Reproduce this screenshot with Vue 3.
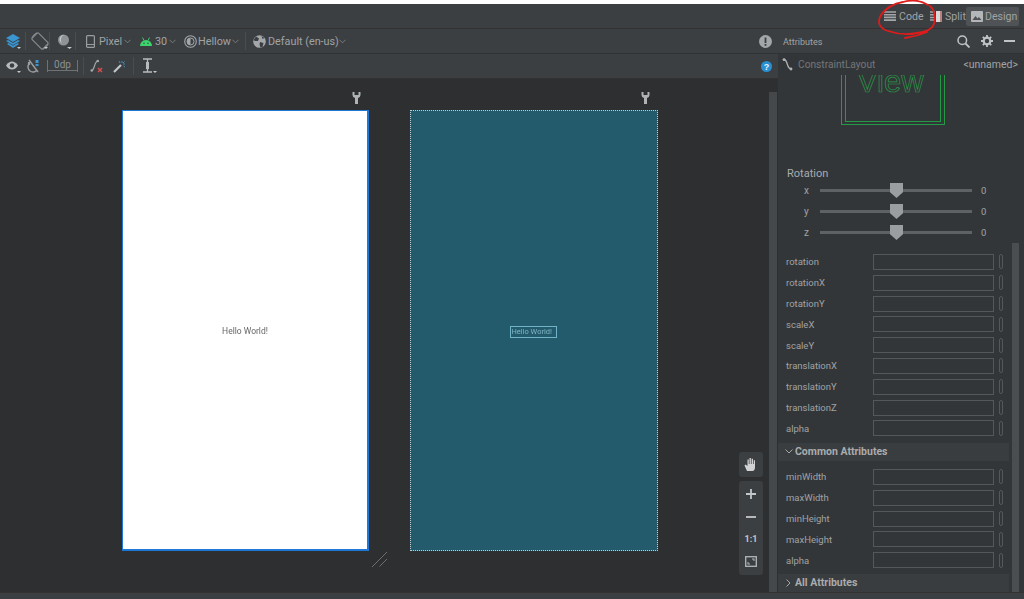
<script setup>
const first = ['rotation','rotationX','rotationY','scaleX','scaleY','translationX','translationY','translationZ','alpha']
const common = ['minWidth','maxWidth','minHeight','maxHeight','alpha']
const axes = ['x','y','z']
</script>

<template>
  <div class="app">
    <div class="topline"></div>
    <header class="titlebar">
      <div class="mode">
        <svg width="12" height="11" viewBox="0 0 12 11"><path d="M0 1h12M0 3.700h12M0 6.400h12M0 9.100h12" stroke="#a4a7a9" stroke-width="1.600"/></svg>
        <span class="w25">Code</span>
      </div>
      <div class="mode split">
        <svg width="12" height="11" viewBox="0 0 12 11"><path d="M0 1h5M0 3.700h5M0 6.400h5M0 9.100h5" stroke="#a4a7a9" stroke-width="1.500"/><rect x="6" y="0" width="4" height="11" fill="#d8d8d8"/><rect x="10" y="0" width="2" height="11" fill="#b98080"/></svg>
        <span class="w19">Split</span>
      </div>
      <div class="mode active">
        <svg width="12" height="11" viewBox="0 0 12 11"><rect width="12" height="11" rx="1" fill="#b4b7b9"/><path d="M1.500 9l3-4 2 2.400 1.400-1.400 2.600 3z" fill="#4e5254"/></svg>
        <span class="w31">Design</span>
      </div>
      <svg class="scribble" width="80" height="45" viewBox="0 0 80 45"><path d="M58 5C50 0 40 0 33 2C24 3 14 9 10 17C7 24 11 29 18 31C27 34 38 35 47 33C55 32 62 30 64 24C66 17 64 9 60 6M35 38C42 37 50 35 57 32" fill="none" stroke="#e01b1b" stroke-width="1.800" stroke-linecap="round"/></svg>
    </header>

    <main class="main">
      <section class="editor">
        <div class="toolbar first">
          <svg class="ml5" width="16" height="16" viewBox="0 0 16 16"><path d="M8 1l7 4-7 4-7-4z" fill="#3a95d0"/><path d="M1 8l2-1 5 3 5-3 2 1-7 4zM2 11l1.500-1L8 12.700 12.500 10 14 11l-6 4z" fill="#3a95d0"/><path d="M12 14h4l-2 2z" fill="#c8c8c8"/></svg>
          <i class="sep ml4"></i>
          <svg class="ml5" width="18" height="18" viewBox="0 0 18 18"><g fill="none" stroke="#8f9294" stroke-width="1"><rect x="4.500" y="1.500" width="9" height="15" rx="1" transform="rotate(-45 9 9)"/><path d="M.8 6A9 9 0 0 1 6 .8M17.200 12A9 9 0 0 1 12 17.200"/></g><path d="M13 15h4l-2 2z" fill="#c8c8c8"/></svg>
          <i class="sep"></i>
          <svg class="ml7" width="15" height="16" viewBox="0 0 15 16"><circle cx="6.500" cy="7" r="5.500" fill="#8f9396"/><path d="M3 5a4 4 0 0 1 4-3a5 5 0 0 0-2 8a4 4 0 0 1-2-5z" fill="#c5d0d6"/><path d="M10 14h5l-2.500 2z" fill="#c8c8c8"/></svg>
          <i class="sep ml3"></i>
          <svg class="ml10" width="9" height="13" viewBox="0 0 9 13"><rect x=".6" y=".6" width="7.800" height="11.800" rx="1" fill="none" stroke="#9a9d9f" stroke-width="1.200"/><path d="M1 9.500h7" stroke="#9a9d9f"/></svg>
          <span class="tb w21 ml4">Pixel</span><svg class="chev ml4" width="7" height="5" viewBox="0 0 8 5"><path d="M.5.500L4 4 7.500.500"/></svg>
          <svg class="ml9" width="12" height="9" viewBox="0 0 12 9"><path d="M0 9a6 6 0 0 1 12 0z" fill="#3dd56d"/><path d="M2.500.500l1.500 3M9.500.500L8 3.500" stroke="#3dd56d" stroke-width=".9"/><circle cx="4" cy="6.300" r=".7" fill="#3c3f41"/><circle cx="8" cy="6.300" r=".7" fill="#3c3f41"/></svg>
          <span class="tb w10 ml3">30</span><svg class="chev ml4" width="7" height="5" viewBox="0 0 8 5"><path d="M.5.500L4 4 7.500.500"/></svg>
          <svg class="ml8" width="13" height="13" viewBox="0 0 13 13"><circle cx="6.500" cy="6.500" r="5.800" fill="none" stroke="#a4a7a9" stroke-width="1.100"/><path d="M6.500 3a3.500 3.500 0 0 0 0 7z" fill="#a4a7a9"/><circle cx="6.500" cy="6.500" r="3.500" fill="none" stroke="#a4a7a9"/></svg>
          <span class="tb w30 ml1">Hellow</span><svg class="chev ml4" width="7" height="5" viewBox="0 0 8 5"><path d="M.5.500L4 4 7.500.500"/></svg>
          <i class="sep ml6"></i>
          <svg class="ml7" width="13" height="13" viewBox="0 0 13 13"><circle cx="6.500" cy="6.500" r="6.300" fill="#a4a7a9"/><path d="M3 1.500l3 2-1 2.500-3 0-1.500-1zM7 7l3.500 1-1 4-2 .5-1-3zM8.500 1l3 2-2 1z" fill="#3c3f41"/></svg>
          <span class="tb w67 ml2">Default (en-us)</span><svg class="chev ml4" width="7" height="5" viewBox="0 0 8 5"><path d="M.5.500L4 4 7.500.500"/></svg>
          <svg class="end" width="13" height="13" viewBox="0 0 13 13"><circle cx="6.500" cy="6.500" r="6.500" fill="#a4a7a9"/><rect x="5.600" y="2.500" width="1.800" height="5.500" fill="#3c3f41"/><rect x="5.600" y="9" width="1.800" height="1.800" fill="#3c3f41"/></svg>
        </div>
        <div class="toolbar second">
          <svg class="ml5" width="16" height="14" viewBox="0 0 16 14"><path d="M1 6.500C3 3.500 5 2.500 7 2.500s4 1 6 4c-2 3-4 4-6 4s-4-1-6-4z" fill="#b8bbbd"/><circle cx="7" cy="6.500" r="2.300" fill="#3c3f41"/><path d="M12 12h4l-2 2z" fill="#c8c8c8"/></svg>
          <svg class="ml6" width="13" height="14" viewBox="0 0 13 14"><path d="M2 5a5 5 0 0 0 8 6M2 1l9 12" fill="none" stroke="#9a9d9f" stroke-width="1.400"/><path d="M2 3v3" stroke="#9a9d9f" stroke-width="2.200"/><rect x="8.500" y="1" width="3" height="3" fill="#3a95d0"/><rect x="8.500" y="5" width="3" height="2" fill="#3a95d0"/></svg>
          <div class="margin ml7"><span>0dp</span></div>
          <i class="sep ml5"></i>
          <svg class="ml6" width="13" height="14" viewBox="0 0 13 14"><path d="M1.500 11.500C5 11.500 4 2 8 2" fill="none" stroke="#a4a7a9" stroke-width="1.200"/><circle cx="1.800" cy="11.500" r="1.300" fill="#a4a7a9"/><circle cx="7.800" cy="2" r="1.300" fill="#a4a7a9"/><path d="M8 9l4 4M12 9l-4 4" stroke="#d94f4f" stroke-width="1.400"/></svg>
          <svg class="ml10" width="13" height="13" viewBox="0 0 13 13"><path d="M1 12l7-7" stroke="#c4c7c9" stroke-width="2.200"/><path d="M9 1v2M12 4h-2M11.500 1.500L10 3M12 7l-1.500-1M6 1l1 2" stroke="#3a95d0" stroke-width=".9"/></svg>
          <i class="sep ml7"></i>
          <svg class="ml8" width="15" height="16" viewBox="0 0 15 16"><path d="M1 1h9M1 14h9M5.500 1v13" stroke="#b8bbbd" stroke-width="1.300" fill="none"/><rect x="4" y="4" width="3" height="7" fill="#b8bbbd"/><path d="M11 13h4l-2 2z" fill="#c8c8c8"/></svg>
          <svg class="end help" width="11" height="11" viewBox="0 0 11 11"><circle cx="5.500" cy="5.500" r="5.500" fill="#2a8fd0"/><text x="5.500" y="8.600" text-anchor="middle" class="q">?</text></svg>
        </div>
        <div class="canvas">
          <div class="phones">
            <div class="phone light">
              <svg class="wrench" width="9" height="12" viewBox="0 0 9 12"><path d="M.5 0v3a3 3 0 0 0 2.500 2.900V12h3V5.900A3 3 0 0 0 8.500 3V0H6.500v3h-4V0z" fill="#b0b3b5"/></svg>
              <span class="hello">Hello World!</span>
              <svg class="resize" width="18" height="18" viewBox="0 0 18 18"><path d="M1 16L16 1M8.500 15.500L16 8" stroke="#6c6e70" stroke-width="1"/></svg>
            </div>
            <div class="phone blue">
              <svg class="wrench" width="9" height="12" viewBox="0 0 9 12"><path d="M.5 0v3a3 3 0 0 0 2.500 2.900V12h3V5.900A3 3 0 0 0 8.500 3V0H6.500v3h-4V0z" fill="#b0b3b5"/></svg>
              <span class="hello selected">Hello World!</span>
            </div>
          </div>
          <div class="float hand">
            <svg width="14" height="15" viewBox="0 0 14 15"><path d="M3 14L.5 8.500l1-1L3.500 9V2.500h1.300V7h.7V1h1.400v6h.7V1.700h1.400V7h.7V3.300h1.300V10c0 2.500-1 4-2.500 4z" fill="#d0d2d3"/></svg>
          </div>
          <div class="float zoom">
            <span class="zbtn"><svg width="10" height="10" viewBox="0 0 10 10"><path d="M5 0v10M0 5h10" stroke="#c4c7c9" stroke-width="1.800"/></svg></span>
            <span class="zbtn"><svg width="10" height="10" viewBox="0 0 10 10"><path d="M0 5h10" stroke="#c4c7c9" stroke-width="1.800"/></svg></span>
            <span class="zbtn one">1:1</span>
            <span class="zbtn"><svg width="12" height="11" viewBox="0 0 12 11"><rect x=".7" y=".7" width="10.600" height="9.600" fill="none" stroke="#b4b7b9" stroke-width="1.300"/><path d="M2.500 8.500V6h1v1.500H5v1zM9.500 2.500V5h-1V3.500H7v-1z" fill="#b4b7b9"/></svg></span>
          </div>
          <div class="vscroll"></div>
        </div>
      </section>

      <aside class="panel">
        <div class="phead">
          <span class="ptitle">Attributes</span>
          <svg class="psearch" width="13" height="13" viewBox="0 0 13 13"><circle cx="5.300" cy="5.300" r="4.300" fill="none" stroke="#c0c3c5" stroke-width="1.500"/><path d="M8.500 8.500L12.500 12.500" stroke="#c0c3c5" stroke-width="1.800"/></svg>
          <svg class="pgear" width="12" height="12" viewBox="0 0 12 12"><circle cx="6" cy="6" r="3.300" fill="none" stroke="#c0c3c5" stroke-width="2.200"/><path d="M6 0v2.500M6 9.500V12M0 6h2.500M9.500 6H12M1.800 1.800l1.800 1.800M8.400 8.400l1.800 1.800M10.200 1.800L8.400 3.600M3.600 8.400l-1.800 1.800" stroke="#c0c3c5" stroke-width="1.800"/></svg>
          <svg class="pmin" width="11" height="2" viewBox="0 0 11 2"><rect width="11" height="2" fill="#c0c3c5"/></svg>
        </div>
        <div class="crumb">
          <svg width="11" height="13" viewBox="0 0 11 13"><path d="M2 1.500C6 1.500 4.500 11 9 11" fill="none" stroke="#b0b3b5" stroke-width="1.300"/><circle cx="2" cy="1.700" r="1.400" fill="#b0b3b5"/><circle cx="9" cy="11" r="1.400" fill="#b0b3b5"/></svg>
          <span class="cname">ConstraintLayout</span>
          <span class="unnamed">&lt;unnamed&gt;</span>
        </div>
        <div class="pbody">
          <div class="preview">
            <div class="vbox"><span class="vtext">View</span></div>
          </div>
          <div class="rotation">Rotation</div>
          <div v-for="a in axes" :key="a" class="slider">
            <span class="axis">{{ a }}</span>
            <div class="track"><i class="thumb"></i></div>
            <span class="val">0</span>
          </div>
          <div class="fields">
            <div v-for="f in first" :key="f" class="field">
              <span class="flabel">{{ f }}</span><i class="input"></i><i class="pill"></i>
            </div>
          </div>
          <div class="section open"><svg width="8" height="5" viewBox="0 0 8 5"><path d="M.5.500L4 4 7.500.500" fill="none" stroke="#a4a7a9"/></svg><b>Common Attributes</b></div>
          <div class="fields common">
            <div v-for="f in common" :key="'c' + f" class="field">
              <span class="flabel">{{ f }}</span><i class="input"></i><i class="pill"></i>
            </div>
          </div>
          <div class="section closed"><svg width="8" height="8" viewBox="0 0 8 8"><path d="M1.500.500L5 4 1.500 7.500" fill="none" stroke="#a4a7a9"/></svg><b>All Attributes</b></div>
          <div class="pscroll"></div>
        </div>
      </aside>
    </main>
    <footer class="foot"></footer>
  </div>
</template>

<style>
html, body { margin: 0; background: #3c3f41; }
</style>

<style scoped>
.app { width: 1024px; height: 599px; display: flex; flex-direction: column; overflow: hidden; background: #3c3f41; font-family: Roboto, "Liberation Sans", sans-serif; color: #a0a3a5; position: relative; }
.topline { height: 4px; background: #fff; flex: none; }
.titlebar { height: 24px; flex: none; display: flex; align-items: center; justify-content: flex-end; padding-right: 5px; background: #3c3f41; border-bottom: 1px solid #323232; box-sizing: content-box; position: relative; }
.mode { display: flex; align-items: center; gap: 3px; height: 19px; font-size: 10.600px; white-space: nowrap; }
.w25 { width: 25px; } .w19 { width: 19px; } .w31 { width: 31px; }
.mode.split { margin-left: 6px; }
.mode.active { background: #505356; border-radius: 2px; padding: 0 3px 0 5px; margin-left: 2px; gap: 2px; }
.scribble { position: absolute; right: 74px; top: -4px; }

.main { flex: 1; display: flex; min-height: 0; }
.editor { width: 778px; display: flex; flex-direction: column; flex: none; }
.toolbar { height: 24px; flex: none; display: flex; align-items: center; background: #3c3f41; border-bottom: 1px solid #323232; }
.tb { font-size: 10.800px; white-space: nowrap; }
.w21 { width: 21px; } .w10 { width: 10px; } .w30 { width: 30px; } .w67 { width: 67px; }
.sep { width: 1px; height: 18px; background: #4a4d4f; display: block; }
.chev { fill: none; stroke: #808385; }
.end { margin-left: auto; margin-right: 6px; }
.help { margin-right: 6px; }
.q { font-size: 9px; font-weight: 700; fill: #e8f4fb; font-family: "Liberation Sans", sans-serif; }
.ml1 { margin-left: 1px; } .ml2 { margin-left: 2px; } .ml3 { margin-left: 3px; } .ml4 { margin-left: 4px; } .ml5 { margin-left: 5px; } .ml6 { margin-left: 6px; } .ml7 { margin-left: 7px; } .ml8 { margin-left: 8px; } .ml9 { margin-left: 9px; } .ml10 { margin-left: 10px; }
.margin { width: 31px; height: 12px; border: 1px solid #6f7274; border-top: 0; border-bottom: 0; position: relative; font-size: 10px; line-height: 9px; text-align: center; box-sizing: border-box; color: #8d9092; }
.margin::after { content: ""; position: absolute; left: 0; right: 0; bottom: 1px; height: 1px; background: #6f7274; }

.canvas { flex: 1; position: relative; background: #2d2f30; min-height: 0; }
.phones { display: flex; gap: 41px; padding: 31px 0 0 122px; }
.phone { width: 247px; height: 441px; box-sizing: border-box; position: relative; display: flex; align-items: center; justify-content: center; flex: none; }
.phone.light { background: #fff; border: 1px solid #1f78d8; border-bottom-width: 2px; border-right-width: 2px; }
.phone.blue { width: 248px; background: #235b6c; border: 1px dotted #c4cccf; }
.hello { font-size: 8.500px; color: #666; white-space: nowrap; position: relative; top: 1px; transform: translateZ(0); }
.selected { font-size: 7.500px; color: #7fb3c2; border: 1px solid #6fb3c8; padding-left: 1px; height: 10px; line-height: 10px; width: 44px; left: -1px; top: 1px; }
.wrench { position: absolute; top: -19px; right: 7px; }
.light .wrench { right: 6px; }
.resize { position: absolute; right: -22px; bottom: -20px; }
.float { position: absolute; left: 739px; width: 24px; background: #3c3f41; border-radius: 3px; display: flex; flex-direction: column; align-items: center; justify-content: center; }
.hand { top: 373px; height: 25px; }
.zoom { top: 402px; height: 94px; justify-content: flex-start; }
.zbtn { height: 22.500px; width: 24px; display: flex; align-items: center; justify-content: center; font-size: 9px; font-weight: 700; color: #c4c7c9; }
.zbtn:first-child { margin-top: 2px; }
.vscroll { position: absolute; left: 769px; top: 13px; bottom: 0; width: 8px; background: #45484a; }

.panel { flex: 1; display: flex; flex-direction: column; background: #333638; min-width: 0; }
.phead { height: 24px; display: flex; align-items: center; background: #3c3f41; border-bottom: 1px solid #323232; flex: none; padding-left: 5px; }
.ptitle { font-size: 9px; flex: 1; position: relative; top: 1px; }
.psearch { margin-right: 11px; }
.pgear { margin-right: 11px; }
.pmin { margin-right: 9px; }
.crumb { height: 21px; box-sizing: border-box; flex: none; display: flex; align-items: center; padding: 0 6px 1px 4px; }
.cname { margin-left: 5px; color: #74777a; flex: 1; font-size: 10.200px; }
.unnamed { color: #a0a3a5; font-size: 10.500px; }
.pbody { flex: 1; position: relative; min-height: 0; }
.preview { height: 50px; padding-left: 63px; overflow: hidden; }
.vbox { width: 104px; height: 50px; box-sizing: border-box; border: 1px solid #259a45; border-top: 0; text-align: center; overflow: hidden; position: relative; }
.vbox::after { content: ""; position: absolute; left: 3px; right: 3px; top: 0; bottom: 2px; border: 1px solid #259a45; border-top: 0; }
.vtext { position: absolute; left: 15px; top: -11px; font-family: "Liberation Sans", sans-serif; font-size: 31px; line-height: 36px; color: transparent; -webkit-text-stroke: .7px #2a9a48; }
.rotation { font-size: 11px; margin: 42px 0 0 9px; height: 13px; line-height: 14px; color: #a9acae; }
.slider { display: flex; align-items: center; height: 21px; }
.axis { width: 42px; padding-left: 26px; box-sizing: border-box; font-size: 10px; }
.track { width: 152px; height: 3px; background: #5f6264; position: relative; }
.thumb { display: block; position: absolute; left: 70px; top: -6px; width: 13px; height: 15px; background: #9b9ea0; clip-path: polygon(0 0, 100% 0, 100% 62%, 50% 100%, 0 62%); }
.val { margin-left: 9px; font-size: 9.500px; }
.fields { margin-top: 8.600px; display: flex; flex-direction: column; }
.field { display: flex; align-items: center; height: 20.800px; padding-left: 8px; }
.flabel { width: 87px; font-size: 9.500px; flex: none; }
.input { display: block; width: 121px; height: 16px; box-sizing: border-box; border: 1px solid #55585a; }
.pill { display: block; width: 4px; height: 15px; margin-left: 5px; border: 1px solid #55585a; border-radius: 2px; box-sizing: border-box; }
.common { margin-top: 5.600px; }
.section { width: 231px; height: 18px; background: #3a3d3f; display: flex; align-items: center; gap: 2px; padding-left: 7px; box-sizing: border-box; font-size: 10.500px; color: #a9acae; }
.section.open { margin-top: 4.200px; }
.section.closed { margin-top: 3.400px; }
.section b { font-weight: 700; }
.pscroll { position: absolute; left: 234px; top: 168px; bottom: 0; width: 7px; background: #4b4e50; }
.foot { height: 7px; box-sizing: border-box; flex: none; background: #3c3f41; border-top: 1px solid #323232; }
</style>
